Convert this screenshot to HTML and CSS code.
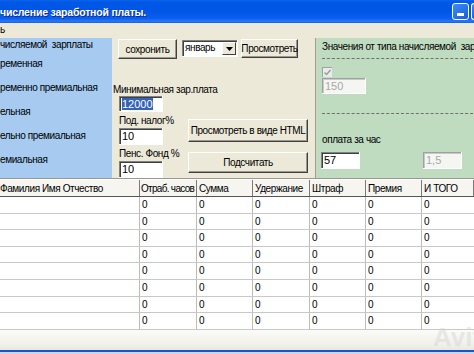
FILE: index.html
```html
<!DOCTYPE html>
<html>
<head>
<meta charset="utf-8">
<link rel="stylesheet" href="styles.css">
</head>
<body>
<div class="win">
  <div class="titlebar">
    <span class="title">числение заработной платы.</span>
    <span class="tbtn"><span class="dash"></span></span>
    <span class="tbtn cut"></span>
  </div>
  <div class="menubar">ь</div>
  <div class="top">
    <div class="leftp">
      <div class="opt first">числяемой&nbsp; зарплаты</div>
      <div class="opt">ременная</div>
      <div class="opt">ременно премиальная</div>
      <div class="opt">ельная</div>
      <div class="opt">ельно премиальная</div>
      <div class="opt">емиальная</div>
    </div>
    <div class="mid">
      <div class="row1">
        <div class="btn b-save">сохронить</div>
        <div class="combo"><span class="ctext">январь</span><span class="carrow"><svg width="7" height="4" viewBox="0 0 7 4"><path d="M0 0H7L3.5 4Z" fill="#000"/></svg></span></div>
        <div class="btn b-view">Просмотреть</div>
      </div>
      <div class="lbl minlbl">Минимальная зар.плата</div>
      <div class="row2">
        <div class="col1">
          <div class="field"><span class="sel">12000</span></div>
          <div class="lbl l2">Под. налог%</div>
          <div class="field f2">10</div>
          <div class="lbl l2">Пенс. Фонд %</div>
          <div class="field f2">10</div>
        </div>
        <div class="col2">
          <div class="btn b-html">Просмотреть в виде HTML</div>
          <div class="btn b-calc">Подсчитать</div>
        </div>
      </div>
    </div>
    <div class="rightp">
      <div class="lbl gtitle">Значения от типа начисляемой&nbsp; зар. п</div>
      <div class="dline d1"></div>
      <div class="chk"><svg width="9" height="9" viewBox="0 0 9 9"><path d="M1.5 4.5L3.5 6.5L7.5 2" stroke="#9a9a9a" stroke-width="1.4" fill="none"/></svg></div>
      <div class="field dis f150">150</div>
      <div class="dline d2"></div>
      <div class="lbl pay">оплата за час</div>
      <div class="payrow">
        <div class="field f57">57</div>
        <div class="field dis f15">1,5</div>
      </div>
    </div>
  </div>
  <div class="grid">
    <div class="gr head">
      <div class="c c0">Фамилия Имя Отчество</div>
      <div class="c c1 tight">Отраб. часов</div>
      <div class="c c2">Сумма</div>
      <div class="c c3">Удержание</div>
      <div class="c c4">Штраф</div>
      <div class="c c5">Премия</div>
      <div class="c c6">И ТОГО</div>
    </div>
    <div class="gr"><div class="c c0"></div><div class="c c1">0</div><div class="c c2">0</div><div class="c c3">0</div><div class="c c4">0</div><div class="c c5">0</div><div class="c c6">0</div></div>
    <div class="gr"><div class="c c0"></div><div class="c c1">0</div><div class="c c2">0</div><div class="c c3">0</div><div class="c c4">0</div><div class="c c5">0</div><div class="c c6">0</div></div>
    <div class="gr"><div class="c c0"></div><div class="c c1">0</div><div class="c c2">0</div><div class="c c3">0</div><div class="c c4">0</div><div class="c c5">0</div><div class="c c6">0</div></div>
    <div class="gr"><div class="c c0"></div><div class="c c1">0</div><div class="c c2">0</div><div class="c c3">0</div><div class="c c4">0</div><div class="c c5">0</div><div class="c c6">0</div></div>
    <div class="gr"><div class="c c0"></div><div class="c c1">0</div><div class="c c2">0</div><div class="c c3">0</div><div class="c c4">0</div><div class="c c5">0</div><div class="c c6">0</div></div>
    <div class="gr"><div class="c c0"></div><div class="c c1">0</div><div class="c c2">0</div><div class="c c3">0</div><div class="c c4">0</div><div class="c c5">0</div><div class="c c6">0</div></div>
    <div class="gr"><div class="c c0"></div><div class="c c1">0</div><div class="c c2">0</div><div class="c c3">0</div><div class="c c4">0</div><div class="c c5">0</div><div class="c c6">0</div></div>
    <div class="gr"><div class="c c0"></div><div class="c c1">0</div><div class="c c2">0</div><div class="c c3">0</div><div class="c c4">0</div><div class="c c5">0</div><div class="c c6">0</div></div>
  </div>
  <div class="status"></div>
  <div class="frame"></div>
  <div class="wm">Avito</div>
</div>
</body>
</html>
```
FILE: styles.css
```css
* { box-sizing: border-box; }
html, body { margin: 0; padding: 0; }
body {
  width: 474px; height: 354px; overflow: hidden;
  font-family: "Liberation Sans", Arial, sans-serif;
  font-size: 10px; letter-spacing: -0.4px; color: #000;
  background: #ece9d8;
}
.win { position: relative; width: 474px; height: 354px; overflow: hidden; background: #ece9d8; }

.titlebar {
  height: 23px; display: flex; align-items: center;
  background: linear-gradient(#0a63e8 0%, #0058e6 10%, #0055e5 45%, #0a5ff0 80%, #2a78f8 92%, #1a5fdc 100%);
}
.title {
  flex: 1; color: #fff; font-weight: bold; font-size: 10.5px;
  font-family: "Liberation Sans", sans-serif; letter-spacing: -0.2px;
  padding-left: 0; text-shadow: 1px 1px 0 #0a2a8a; white-space: nowrap;
}
.tbtn {
  width: 17px; height: 17px; border: 1px solid #fff; border-radius: 3px;
  background: linear-gradient(135deg, #3c8cf8, #1a5ce0);
  margin-right: 2px; position: relative; flex: none;
}
.tbtn.cut { width: 3px; margin-right: 0; border-right: none; border-radius: 3px 0 0 3px; }
.dash { position: absolute; left: 4px; bottom: 3px; width: 7px; height: 3px; background: #fff; }

.menubar { height: 15px; line-height: 13px; padding-left: 0; }

.top { display: flex; height: 140px; }
.leftp { width: 112px; background: #a6caf0; display: flex; flex-direction: column; }
.opt { line-height: 24px; white-space: nowrap; }
.opt.first { line-height: 13px; margin-bottom: 1px; }

.mid { width: 200px; display: flex; flex-direction: column; }
.row1 { display: flex; padding: 1px 0 0 6px; align-items: flex-start; }
.btn {
  background: #ece9d8; display: flex; align-items: center; justify-content: center;
  white-space: nowrap;
  border-top: 1px solid #fff; border-left: 1px solid #fff;
  border-right: 1px solid #404040; border-bottom: 1px solid #404040;
  box-shadow: inset -1px -1px 0 #9a9890;
}
.b-save { width: 59px; height: 20px; }
.combo {
  width: 56px; height: 17px; margin-left: 5px; margin-top: 1px; background: #fff;
  display: flex; box-shadow: inset 1px 1px 0 #808080, inset 2px 2px 0 #404040;
  border-right: 1px solid #fff; border-bottom: 1px solid #fff;
}
.ctext { flex: 1; padding: 1px 0 0 3px; line-height: 13px; }
.carrow {
  width: 14px; height: 13px; margin: 2px 1px 1px 0; background: #ece9d8;
  border-top: 1px solid #fff; border-left: 1px solid #fff;
  border-right: 1px solid #404040; border-bottom: 1px solid #404040;
  display: flex; align-items: center; justify-content: center;
}
.b-view { width: 57px; height: 19px; margin-left: 3px; }

.lbl { line-height: 13px; white-space: nowrap; }
.minlbl { margin-top: 24px; padding-left: 1px; }
.row2 { display: flex; padding-left: 7px; }
.col1 { width: 44px; display: flex; flex-direction: column; }
.field {
  height: 16px; width: 44px; background: #fff; padding: 2px 0 0 3px; line-height: 13px;
  font-size: 11px; letter-spacing: 0;
  box-shadow: inset 1px 1px 0 #808080, inset 2px 2px 0 #404040;
  border-right: 1px solid #fff; border-bottom: 1px solid #fff;
  white-space: nowrap; overflow: hidden;
}
.sel { background: #3563b8; color: #fff; }
.l2 { margin-top: 2px; }
.f2 { margin-top: 1px; height: 17px; }
.col2 { margin-left: 25px; display: flex; flex-direction: column; }
.b-html { width: 120px; height: 23px; margin-top: 23px; }
.b-calc { width: 120px; height: 21px; margin-top: 10px; }

.rightp {
  flex: 1; background: #c0dcc0; padding-left: 6px;
  border-left: 1px solid #a09e94; margin-left: 3px; overflow: hidden;
}
.gtitle { margin-top: 2px; }
.dline { border-top: 1px dashed #707070; margin-right: -4px; }
.d1 { margin-top: 5px; }
.chk {
  width: 10px; height: 10px; margin-top: 8px; background: #e8ece8;
  box-shadow: inset 1px 1px 0 #a0a0a0; display: flex; align-items: center; justify-content: center;
}
.dis { background: #f4f6f2; color: #a8a8a8; box-shadow: inset 1px 1px 0 #a0a0a0, inset 2px 2px 0 #c8c8c8; }
.f150 { margin-top: 1px; }
.d2 { margin-top: 19px; }
.pay { margin-top: 19px; }
.payrow { display: flex; margin-top: 6px; margin-left: -1px; }
.f57 { width: 39px; height: 17px; }
.f15 { width: 39px; height: 17px; margin-left: 63px; }

.grid { border-top: 1px solid #9a9890; box-shadow: 0 -1px 0 #ffffff inset; padding-top: 1px; background: #fff; }
.gr { display: flex; height: 16.6px; border-bottom: 1px solid #c8c8c8; }
.gr.head { height: 17px; background: #f6f5f0; border-bottom: 1px solid #555; }
.c { border-right: 1px solid #bcbcbc; padding: 2px 0 0 2px; line-height: 12px; white-space: nowrap; overflow: hidden; }
.head .c { border-right: 1px solid #7a7a7a; padding-top: 3px; }
.head .tight { letter-spacing: -0.7px; padding-left: 1px; }
.c0 { width: 140px; padding-left: 0; }
.c1 { width: 57px; }
.c2 { width: 56px; }
.c3 { width: 57px; }
.c4 { width: 56px; }
.c5 { width: 56px; }
.c6 { flex: 1; border-right: none; }

.status { height: 20px; background: linear-gradient(#fbfbf8, #f1f1ea 70%, #e9e8e0); }
.frame { height: 6px; border-top: 2px solid #1a55c8; background: #c8d6f0; }
.wm {
  position: absolute; left: 433px; top: 322px; font-size: 26px; font-weight: bold; letter-spacing: 0;
  color: rgba(210, 210, 210, 0.45); font-family: "Liberation Sans", sans-serif;
}
```
